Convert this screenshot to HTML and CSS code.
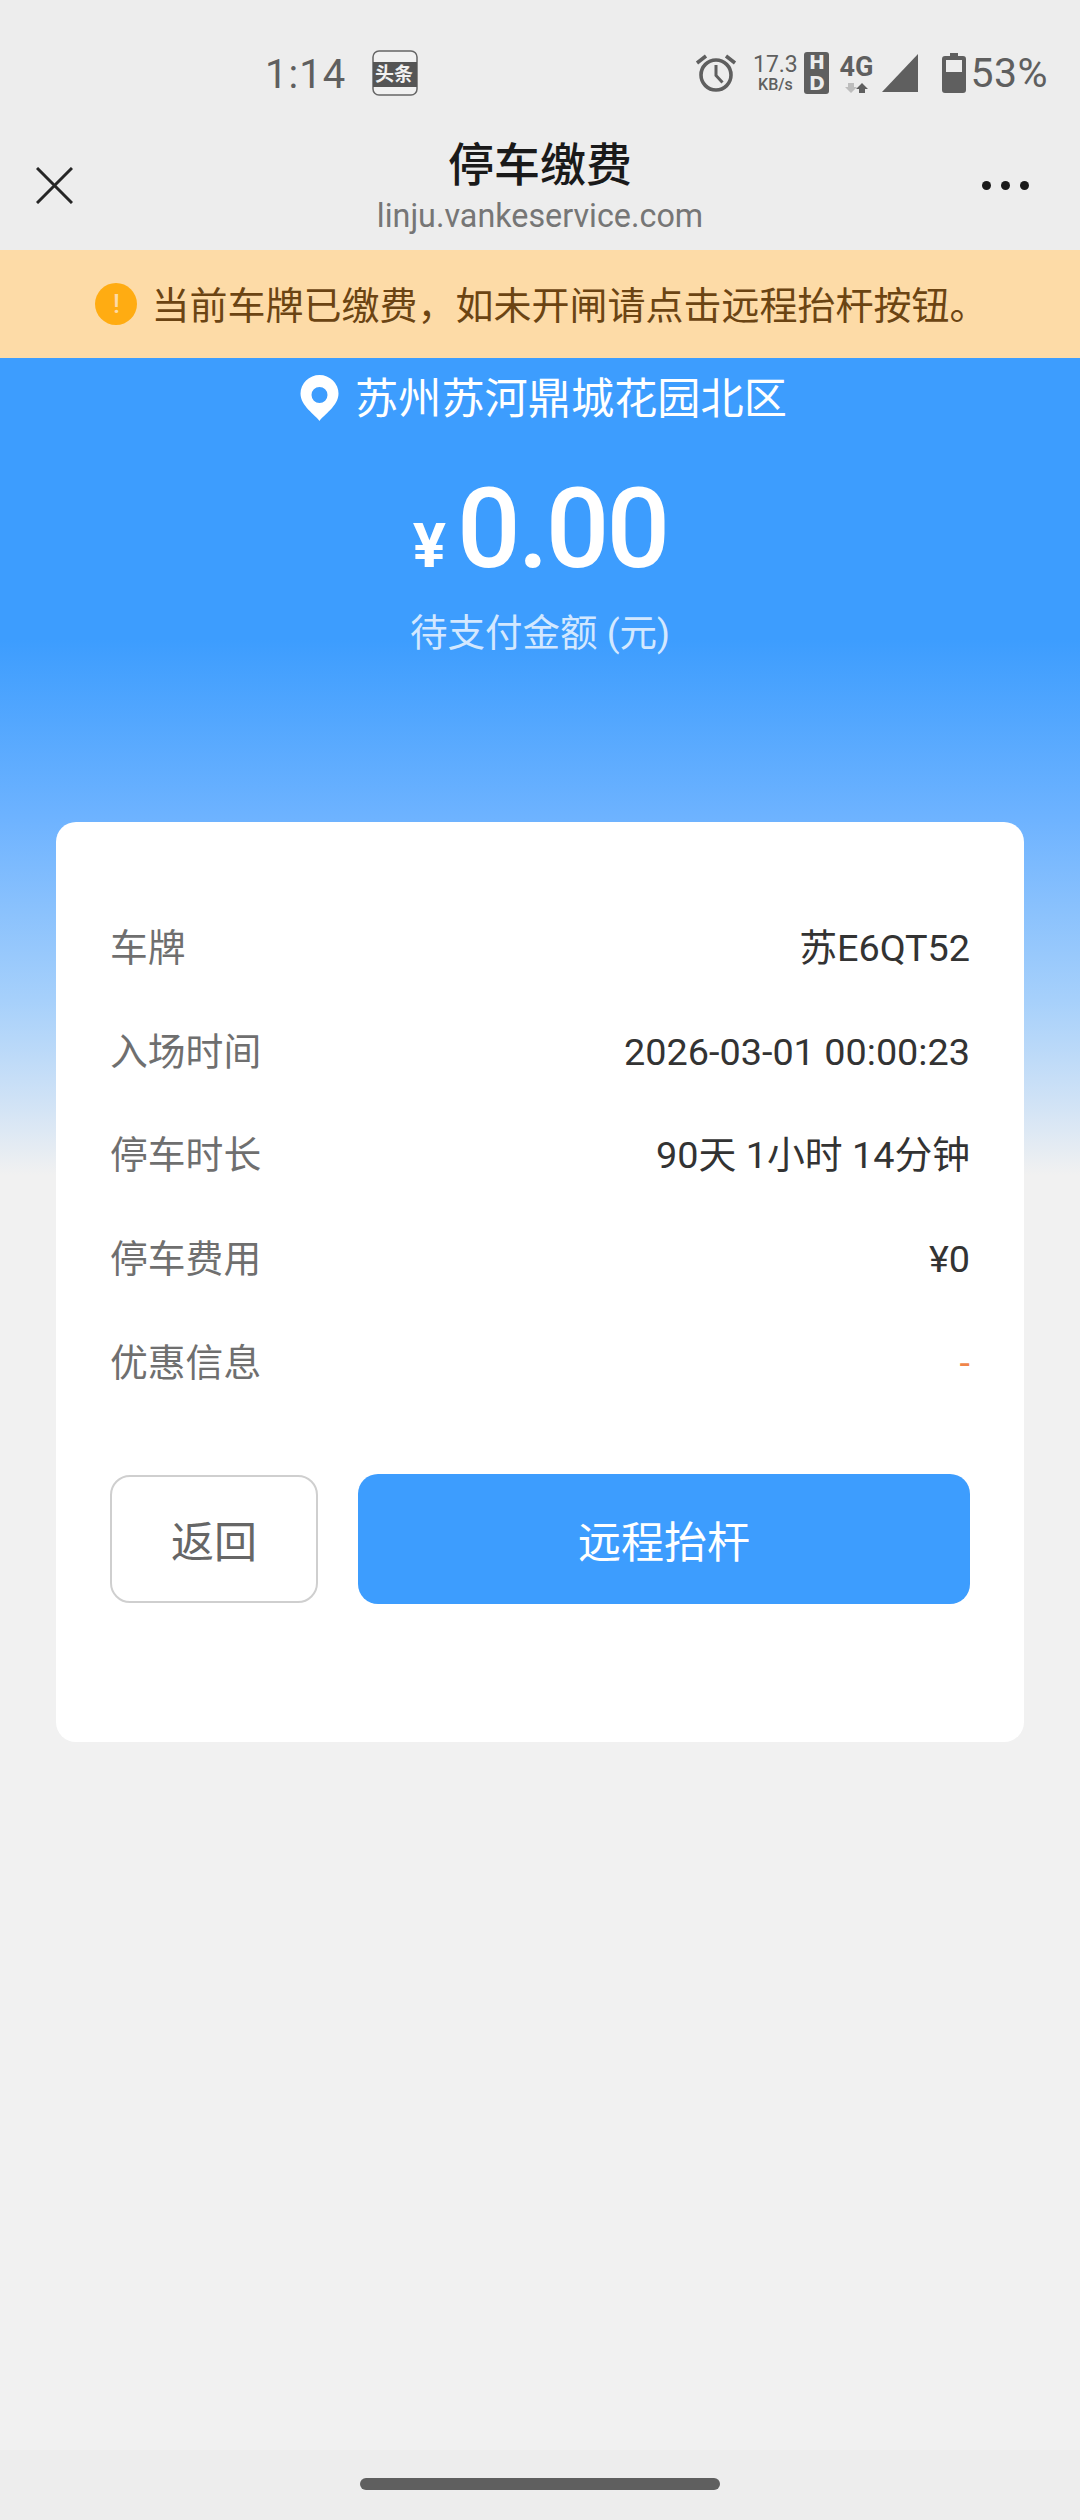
FILE: index.html
```html
<!DOCTYPE html>
<html lang="zh-CN">
<head>
  <meta charset="UTF-8">
  <meta name="viewport" content="width=device-width, initial-scale=1.0">
  <title>停车缴费</title>
  <link rel="stylesheet" href="styles.css">
</head>
<body>
  <div class="statusbar">
    <span class="time">1:14</span>
    <svg class="app-icon" width="46" height="46" viewBox="0 0 46 46">
      <rect x="1" y="1" width="44" height="44" rx="6" fill="#f1f1f1" stroke="#666" stroke-width="1.5"/>
      <rect x="1" y="12" width="44" height="25" fill="#555"/>
    </svg>
    <span class="app-label">头条</span>
    <span class="spacer"></span>
    <svg class="alarm" width="42" height="40" viewBox="0 0 42 40" fill="none" stroke="#5f5f5f">
      <circle cx="21" cy="22" r="15" stroke-width="3.6"/>
      <path d="M21 12v10.500l6.500 7" stroke-width="3"/>
      <path d="M2 10l9-7M40 10l-9-7" stroke-width="3.6"/>
    </svg>
    <div class="speed"><span class="speed-num">17.3</span><span class="speed-unit">KB/s</span></div>
    <div class="hd"><span>H</span><span>D</span></div>
    <div class="net">
      <span class="net-label">4G</span>
      <svg width="26" height="10" viewBox="0 0 26 10">
        <path d="M8 10L2 4h3V0h6v4h3z" fill="#bdbdbd"/>
        <path d="M19 0l6 6h-3v4h-6V6h-3z" fill="#5f5f5f"/>
      </svg>
    </div>
    <svg class="signal" width="36" height="38" viewBox="0 0 36 38"><path d="M36 0v38H0z" fill="#5f5f5f"/></svg>
    <svg class="battery" width="24" height="40" viewBox="0 0 24 40">
      <path d="M8 0h8v3h5a3 3 0 0 1 3 3v31a3 3 0 0 1-3 3H3a3 3 0 0 1-3-3V6a3 3 0 0 1 3-3h5z" fill="#5f5f5f"/>
      <rect x="4" y="7" width="16" height="12" fill="#ededed"/>
    </svg>
    <span class="percent">53%</span>
  </div>

  <header class="titlebar">
    <svg class="close" width="37" height="37" viewBox="0 0 37 37" fill="none" stroke="#262626" stroke-width="3">
      <path d="M1 1l35 35M36 1L1 36"/>
    </svg>
    <div class="title-wrap">
      <div class="title">停车缴费</div>
      <div class="url">linju.vankeservice.com</div>
    </div>
    <div class="more"><i></i><i></i><i></i></div>
  </header>

  <div class="notice">
    <span class="notice-icon">!</span>
    <span>当前车牌已缴费，如未开闸请点击远程抬杆按钮。</span>
  </div>

  <main class="main">
    <div class="location">
      <svg class="pin" width="39" height="46" viewBox="0 0 38 46">
        <path fill-rule="evenodd" fill="#fff" d="M19 46C15 40 0 31 0 18.500a19 18.500 0 0 1 38 0C38 31 23 40 19 46zM19 12a8 8 0 1 0 0 16 8 8 0 0 0 0-16z"/>
      </svg>
      <span>苏州苏河鼎城花园北区</span>
    </div>
    <div class="amount"><span class="yen">¥</span><span class="sum">0.00</span></div>
    <div class="caption">待支付金额 (元)</div>

    <section class="card">
      <div class="row"><span class="label">车牌</span><span class="value">苏E6QT52</span></div>
      <div class="row"><span class="label">入场时间</span><span class="value">2026-03-01 00:00:23</span></div>
      <div class="row"><span class="label">停车时长</span><span class="value">90天 1小时 14分钟</span></div>
      <div class="row"><span class="label">停车费用</span><span class="value">¥0</span></div>
      <div class="row"><span class="label">优惠信息</span><span class="value discount">-</span></div>
      <div class="actions">
        <button class="btn btn-back">返回</button>
        <button class="btn btn-main">远程抬杆</button>
      </div>
    </section>
  </main>

  <div class="homebar"><span class="pill"></span></div>
</body>
</html>
```

FILE: styles.css
```css
* {
  box-sizing: border-box;
}

html, body {
  height: 100%;
}

body {
  margin: 0;
  height: 2520px;
  display: flex;
  flex-direction: column;
  font-family: Roboto, "Noto Sans CJK SC", sans-serif;
  background-color: #f1f1f1;
  color: #333;
}

/* status bar */
.statusbar {
  height: 120px;
  padding: 26px 32px 0 265px;
  display: flex;
  align-items: center;
  background-color: #ededed;
  color: #5f5f5f;
}

.time {
  font-size: 40px;
  letter-spacing: 1px;
  width: 107px;
  margin-top: 2px;
}

.app-icon {
  flex: none;
}

.app-label {
  width: 40px;
  margin-left: -43px;
  margin-top: 3px;
  font-size: 19px;
  line-height: 20px;
  font-weight: 700;
  color: #f1f1f1;
  white-space: nowrap;
}

.spacer {
  flex: 1;
}

.alarm {
  margin-right: 16px;
}

.speed {
  display: flex;
  flex-direction: column;
  align-items: center;
  width: 44px;
  margin-right: 7px;
  line-height: 1;
}

.speed-num {
  font-size: 23px;
}

.speed-unit {
  font-size: 16px;
  font-weight: 500;
  margin-top: 1px;
}

.hd {
  width: 25px;
  height: 42px;
  margin-right: 9px;
  border-radius: 3px;
  background-color: #5f5f5f;
  color: #ededed;
  display: flex;
  flex-direction: column;
  align-items: center;
  font-family: "DejaVu Sans", sans-serif;
  font-size: 19px;
  font-weight: 700;
  line-height: 21px;
}

.net {
  width: 36px;
  margin-right: 8px;
  display: flex;
  flex-direction: column;
  align-items: center;
  gap: 3px;
}

.net-label {
  font-size: 27px;
  font-weight: 700;
  line-height: 26px;
}

.signal {
  margin-right: 24px;
}

.battery {
  margin-right: 4px;
}

.percent {
  font-size: 41px;
  letter-spacing: 0.5px;
}

/* title */
.titlebar {
  height: 130px;
  padding: 0 36px;
  display: grid;
  grid-template-columns: 1fr auto 1fr;
  align-items: center;
  background-color: #ededed;
}

.title-wrap {
  text-align: center;
  margin-top: -1px;
}

.title {
  font-size: 46px;
  line-height: 62px;
  font-weight: 500;
  color: #1a1a1a;
}

.url {
  font-size: 32.300px;
  line-height: 40px;
  color: #767676;
}

.more {
  justify-self: end;
  margin-right: 15px;
  display: flex;
  gap: 10px;
}

.more i {
  width: 9px;
  height: 9px;
  border-radius: 50%;
  background-color: #1a1a1a;
}

/* notice */
.notice {
  height: 108px;
  padding: 0 0 4px 3px;
  display: flex;
  align-items: center;
  justify-content: center;
  gap: 14px;
  background-color: #fddba7;
  color: #6b4413;
  font-size: 38px;
}

.notice-icon {
  width: 42px;
  height: 42px;
  margin-top: 4px;
  border-radius: 50%;
  background-color: #ffac12;
  color: #fddba7;
  font-size: 26px;
  font-weight: 500;
  line-height: 42px;
  text-align: center;
}

/* hero */
.main {
  flex: 1;
  display: flex;
  flex-direction: column;
  align-items: center;
  background: linear-gradient(#3d9dfe 282px, #6eb3ff 462px, #a6d0fb 642px, #cfe2f6 742px, #f1f1f1 817px);
}

.location {
  height: 74px;
  padding-left: 7px;
  display: flex;
  align-items: center;
  gap: 16px;
  color: #fff;
  font-size: 43.200px;
}

.pin {
  margin-top: 5px;
}

.amount {
  height: 122px;
  margin-top: 36px;
  line-height: 122px;
  display: flex;
  align-items: baseline;
  color: #fff;
}

.yen {
  font-size: 62px;
  font-weight: 700;
  margin-right: 11px;
}

.sum {
  font-size: 112px;
  font-weight: 500;
  letter-spacing: -3px;
}

.caption {
  margin-top: 18px;
  font-size: 37.500px;
  line-height: 50px;
  color: #d3e8ff;
}

/* card */
.card {
  width: 968px;
  height: 920px;
  margin-top: 164px;
  padding: 74px 54px 0;
  border-radius: 20px;
  background-color: #fff;
}

.row {
  height: 103.700px;
  display: flex;
  align-items: center;
  justify-content: space-between;
  font-size: 37.800px;
  line-height: 50px;
}

.label {
  color: #6f6f6f;
}

.value {
  color: #333;
}

.discount {
  color: #f0854a;
}

.actions {
  margin-top: 60px;
  display: flex;
  gap: 40px;
  align-items: center;
}

.btn {
  font-family: inherit;
  font-size: 43px;
  border-radius: 20px;
}

.btn-back {
  width: 208px;
  height: 128px;
  border: 2px solid #cfcfcf;
  background-color: #fff;
  color: #666;
}

.btn-main {
  flex: 1;
  height: 130px;
  border: 0;
  background-color: #3d9dfe;
  color: #fff;
}

/* gesture bar */
.homebar {
  height: 70px;
  display: flex;
  justify-content: center;
  padding-top: 28px;
  background-color: #ededed;
}

.pill {
  width: 360px;
  height: 12px;
  border-radius: 6px;
  background-color: #5f5f5f;
}
```
